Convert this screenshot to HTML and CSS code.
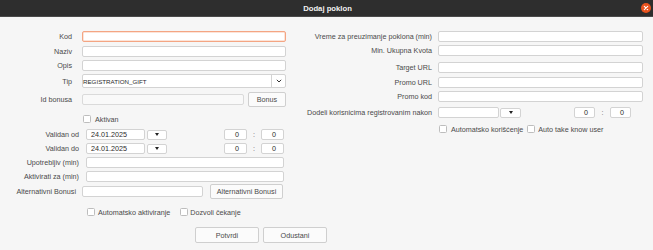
FILE: index.html
```html
<!DOCTYPE html>
<html>
<head>
<meta charset="utf-8">
<link rel="stylesheet" href="styles.css">
</head>
<body>
<div class="window">
  <div class="titlebar">
    <span class="title">Dodaj poklon</span>
    <span class="close"><svg width="10" height="10" viewBox="0 0 10 10"><circle cx="5" cy="5" r="5" fill="#e9541f"/><path d="M3.3 3.3 L6.7 6.7 M6.7 3.3 L3.3 6.7" stroke="#fff" stroke-width="1.1" stroke-linecap="round"/></svg></span>
  </div>
  <div class="content">
    <div class="col left">
      <div class="row r-kod"><label class="lbl w72">Kod</label><div class="input focus w204"></div></div>
      <div class="row r-naziv"><label class="lbl w72">Naziv</label><div class="input w204"></div></div>
      <div class="row r-opis"><label class="lbl w72">Opis</label><div class="input w204"></div></div>
      <div class="row r-tip"><label class="lbl w72">Tip</label>
        <div class="combo"><span class="combo-text">REGISTRATION_GIFT</span><span class="combo-btn"><svg width="6" height="4" viewBox="0 0 6 4"><path d="M0.8 0.8 L3 3 L5.2 0.8" fill="none" stroke="#333" stroke-width="1"/></svg></span></div>
      </div>
      <div class="row r-bonus"><label class="lbl w72">Id bonusa</label><div class="input ro w162"></div><button class="btn b-bonus">Bonus</button></div>
      <div class="row r-aktivan"><span class="cb c-aktivan"></span><span class="cb-lbl">Aktivan</span></div>
      <div class="row r-date"><label class="lbl w79">Validan od</label><div class="input date">24.01.2025</div><span class="dd"><span class="tri"></span></span><div class="input time t-left">0</div><span class="colon">:</span><div class="input time">0</div></div>
      <div class="row r-date2"><label class="lbl w79">Validan do</label><div class="input date">24.01.2025</div><span class="dd"><span class="tri"></span></span><div class="input time t-left">0</div><span class="colon">:</span><div class="input time">0</div></div>
      <div class="row r-upo"><label class="lbl w79">Upotrebljiv (min)</label><div class="input w198"></div></div>
      <div class="row r-akt"><label class="lbl w79">Aktivirati za (min)</label><div class="input w198"></div></div>
      <div class="row r-alt"><label class="lbl w76">Alternativni Bonusi</label><div class="input w121"></div><button class="btn b-alt">Alternativni Bonusi</button></div>
      <div class="row r-checks"><span class="cb c-auto"></span><span class="cb-lbl">Automatsko aktiviranje</span><span class="cb c-doz"></span><span class="cb-lbl">Dozvoli čekanje</span></div>
      <div class="row r-actions"><button class="btn b-main b-potvrdi">Potvrdi</button><button class="btn b-main">Odustani</button></div>
    </div>
    <div class="col right">
      <div class="row r-vreme"><label class="lbl w132">Vreme za preuzimanje poklona (min)</label><div class="input w205"></div></div>
      <div class="row r-min"><label class="lbl w132">Min. Ukupna Kvota</label><div class="input w205"></div></div>
      <div class="row r-target"><label class="lbl w132">Target URL</label><div class="input w205"></div></div>
      <div class="row r-purl"><label class="lbl w132">Promo URL</label><div class="input w205"></div></div>
      <div class="row r-pkod"><label class="lbl w132">Promo kod</label><div class="input w205"></div></div>
      <div class="row r-dodeli"><label class="lbl w132">Dodeli korisnicima registrovanim nakon</label><div class="input date2"></div><span class="dd dd2"><span class="tri"></span></span><div class="input time t2 t-right">0</div><span class="colon c2">:</span><div class="input time t2">0</div></div>
      <div class="row r-rchecks"><span class="cb c-rauto"></span><span class="cb-lbl">Automatsko korišćenje</span><span class="cb c-take"></span><span class="cb-lbl">Auto take know user</span></div>
    </div>
  </div>
</div>
</body>
</html>
```
FILE: styles.css
```css
* { box-sizing: border-box; }
html, body { margin: 0; padding: 0; }
body {
  width: 653px;
  height: 250px;
  overflow: hidden;
  background: #f6f6f6;
  font-family: "Liberation Sans", Arial, sans-serif;
  font-size: 7.2px;
  color: #4a4a4a;
}
.window { width: 653px; height: 250px; background: #f6f6f6; }
.titlebar {
  height: 17px;
  background: #2e2e2e;
  border-bottom: 1px solid #4a4a4a;
  display: flex;
  align-items: center;
  justify-content: center;
  position: relative;
}
.title { color: #f2f2f2; font-weight: bold; font-size: 7.7px; margin-left: 2px; }
.close { position: absolute; right: 2px; top: 3px; width: 10px; height: 10px; display: flex; }
.content { display: flex; }
.col { display: flex; flex-direction: column; }
.left { width: 300px; }
.right { width: 353px; }
.row { display: flex; align-items: center; }
.lbl { text-align: right; flex: none; color: #4a4a4a; white-space: nowrap; }
.w72 { width: 72px; margin-right: 10px; }
.w79 { width: 79px; margin-right: 7px; }
.w76 { width: 76px; margin-right: 6px; }
.w132 { width: 132px; margin-right: 6px; }
.input {
  height: 11px;
  background: #fff;
  border: 1px solid #d3d3d3;
  border-radius: 2px;
  flex: none;
  color: #2a2a2a;
  display: flex;
  align-items: center;
}
.input.ro { background: #f9f9f9; border-color: #dadada; }
.input.focus { border-color: #f4a583; box-shadow: inset 0 0 0 0.5px #f9c9b3; }
.w204 { width: 204px; }
.w162 { width: 162px; }
.w198 { width: 198px; }
.w121 { width: 121px; }
.w205 { width: 205px; }

.r-kod { margin-top: 14px; height: 11px; }
.r-naziv { margin-top: 4px; height: 11px; }
.r-opis { margin-top: 3px; height: 11px; }
.r-tip { margin-top: 3px; height: 14px; }
.r-bonus { margin-top: 4px; height: 15px; }
.r-aktivan { margin-top: 8px; height: 8px; }
.r-date { margin-top: 6px; height: 11px; }
.r-date2 { margin-top: 3px; height: 11px; }
.r-upo { margin-top: 3px; height: 11px; }
.r-akt { margin-top: 3px; height: 11px; }
.r-alt { margin-top: 2px; height: 15px; }
.r-checks { margin-top: 9px; height: 8px; }
.r-actions { margin-top: 11px; height: 16px; }

.r-vreme { margin-top: 14px; height: 11px; }
.r-min { margin-top: 3px; height: 11px; }
.r-target { margin-top: 6px; height: 11px; }
.r-purl { margin-top: 4px; height: 11px; }
.r-pkod { margin-top: 3px; height: 11px; }
.r-dodeli { margin-top: 5px; height: 11px; }
.r-rchecks { margin-top: 7px; height: 8px; }

.combo {
  width: 204px;
  height: 14px;
  display: flex;
  background: #fff;
  border: 1px solid #d3d3d3;
  border-radius: 2px;
}
.combo-text { flex: 1; display: flex; align-items: center; font-size: 6.2px; color: #2a2a2a; }
.combo-btn {
  width: 14px;
  border-left: 1px solid #d3d3d3;
  display: flex;
  align-items: center;
  justify-content: center;
}

.btn {
  font-family: inherit;
  font-size: 7.2px;
  color: #4a4a4a;
  background: #fbfbfb;
  border: 1px solid #cfcfcf;
  border-radius: 2px;
  padding: 0;
  flex: none;
}
.b-bonus { width: 38px; height: 15px; margin-left: 4px; }
.b-alt { width: 73px; height: 15px; margin-left: 7px; }
.b-main { width: 64px; height: 16px; }
.b-potvrdi { margin-left: 195px; margin-right: 4px; }

.cb {
  width: 8px;
  height: 8px;
  background: #fff;
  border: 1px solid #bdbdbd;
  border-radius: 1.5px;
  flex: none;
}
.cb-lbl { margin-left: 3px; white-space: nowrap; }
.c-aktivan { margin-left: 83px; margin-right: 1px; }
.c-auto { margin-left: 87px; }
.c-doz { margin-left: 10px; margin-right: -1px; }
.c-rauto { margin-left: 139px; margin-right: 1px; }
.c-take { margin-left: 4px; }

.date { width: 59px; padding-left: 4px; }
.date2 { width: 61px; }
.dd {
  width: 20px;
  height: 10px;
  margin-left: 2px;
  background: #fff;
  border: 1px solid #d3d3d3;
  border-radius: 2px;
  display: flex;
  align-items: center;
  justify-content: center;
  flex: none;
}
.dd2 { margin-left: 1px; width: 21px; }
.tri {
  width: 0; height: 0;
  border-left: 2.5px solid transparent;
  border-right: 2.5px solid transparent;
  border-top: 3px solid #222;
}
.time { width: 23px; justify-content: flex-end; padding-right: 7px; }
.t-left { margin-left: 57px; }
.colon { width: 14px; text-align: center; color: #666; flex: none; }
.t2 { width: 21px; padding-right: 6px; }
.t-right { margin-left: 53px; }
.c2 { width: 15px; }
```
